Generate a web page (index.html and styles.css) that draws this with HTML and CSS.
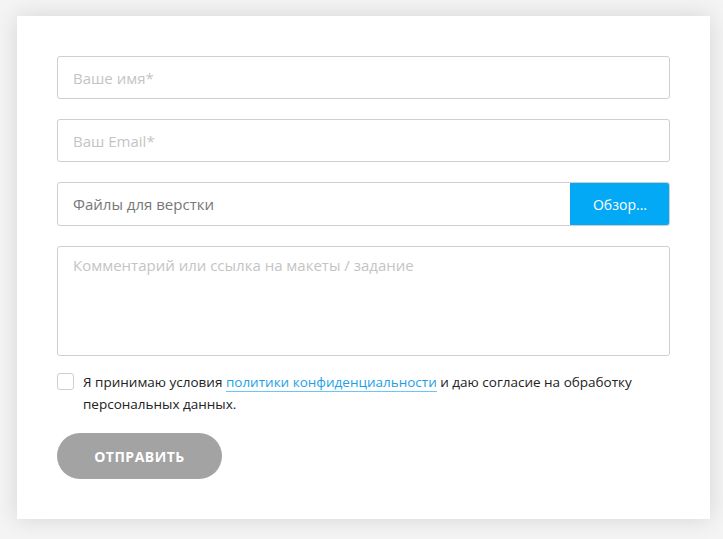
FILE: index.html
```html
<!DOCTYPE html>
<html lang="ru">
<head>
<meta charset="utf-8">
<title>Форма</title>
<link rel="stylesheet" href="styles.css">
</head>
<body>
<div class="page">
  <form class="card">
    <input class="field" type="text" placeholder="Ваше имя*">
    <input class="field" type="text" placeholder="Ваш Email*">
    <div class="file-row">
      <span class="file-name">Файлы для верстки</span>
      <span class="browse">Обзор...</span>
    </div>
    <textarea class="area" placeholder="Комментарий или ссылка на макеты / задание"></textarea>
    <label class="agree">
      <span class="box"></span>
      <span class="agree-text">Я принимаю условия <a class="link" href="#">политики конфиденциальности</a> и даю согласие на обработку персональных данных.</span>
    </label>
    <button class="submit" type="button">Отправить</button>
  </form>
</div>
</body>
</html>
```
FILE: styles.css
```css
* { box-sizing: border-box; }
html, body { margin: 0; padding: 0; }
body {
  background: #f4f4f4;
  font-family: "Open Sans", "Noto Sans", sans-serif;
}
.page {
  padding: 16px 13px 20px 17px;
}
.card {
  background: #fff;
  width: 693px;
  padding: 40px 40px 40px 40px;
  display: flex;
  flex-direction: column;
  box-shadow: 0 0 22px rgba(0,0,0,0.13);
}
.field {
  display: block;
  width: 613px;
  height: 43px;
  border: 1px solid #cfcfcf;
  border-radius: 3px;
  padding: 0 15px;
  font-family: inherit;
  font-size: 15px;
  color: #333;
  margin: 0 0 20px 0;
  outline: none;
}
.field::placeholder, .area::placeholder { color: #c4c4c4; }
.file-row {
  display: flex;
  height: 44px;
  border: 1px solid #cfcfcf;
  border-radius: 3px;
  margin-bottom: 20px;
  overflow: hidden;
}
.file-name {
  flex: 1;
  display: flex;
  align-items: center;
  padding-left: 15px;
  font-size: 15px;
  color: #777;
}
.browse {
  width: 100px;
  margin: -1px -1px -1px 0;
  background: #03a9f4;
  color: #fff;
  font-size: 14px;
  display: flex;
  align-items: center;
  justify-content: center;
  border-radius: 0 3px 3px 0;
}
.area {
  display: block;
  width: 613px;
  height: 110px;
  border: 1px solid #cfcfcf;
  border-radius: 3px;
  padding: 8px 15px;
  font-family: inherit;
  font-size: 15px;
  resize: none;
  outline: none;
  margin: 0 0 15px 0;
}
.agree {
  display: flex;
  gap: 9px;
  font-size: 13.5px;
  line-height: 22px;
  color: #222;
}
.box {
  flex: none;
  width: 17px;
  height: 17px;
  border: 1px solid #cfcfcf;
  border-radius: 3px;
  margin-top: 2px;
}
.link {
  color: #1e9fe6;
  text-decoration: none;
  border-bottom: 1px solid #6cc6f5;
}
.submit {
  margin-top: 18px;
  width: 165px;
  height: 46px;
  border: none;
  border-radius: 23px;
  background: #a3a3a3;
  color: #fff;
  font-family: inherit;
  font-weight: 700;
  font-size: 14px;
  letter-spacing: 0.5px;
  text-transform: uppercase;
}
```
